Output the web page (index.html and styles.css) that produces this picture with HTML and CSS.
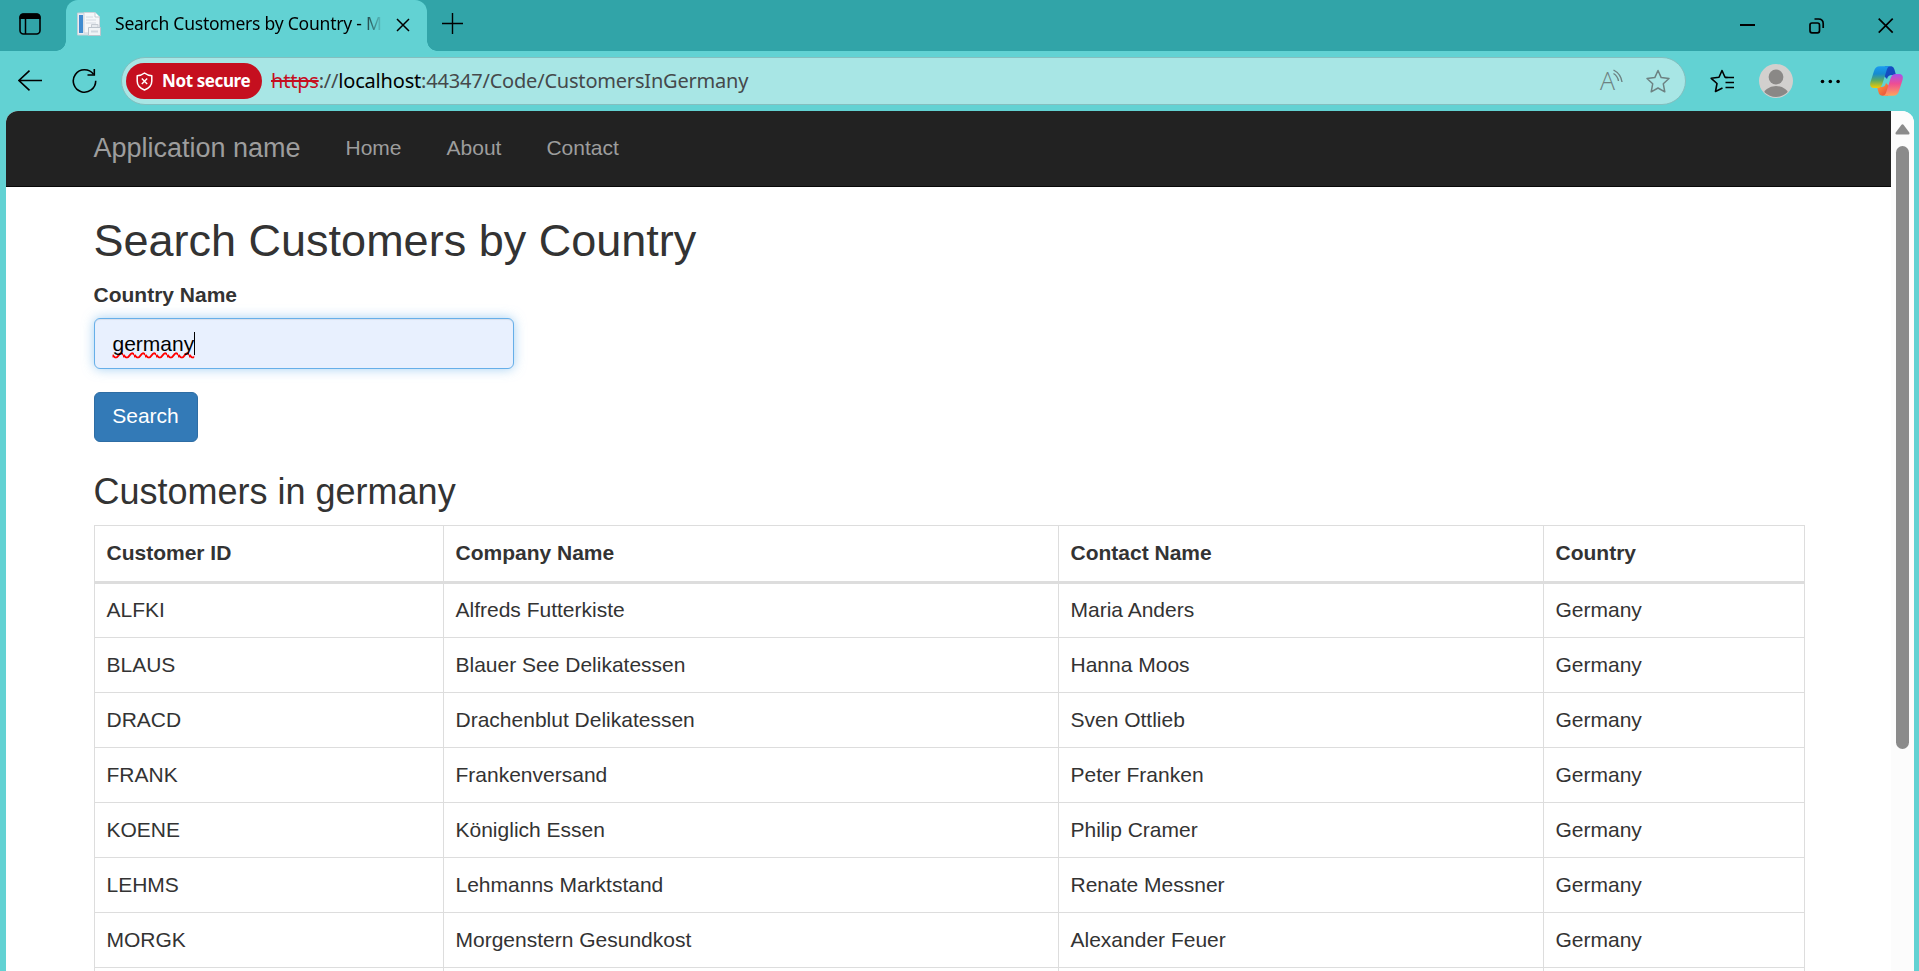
FILE: index.html
```html
<!DOCTYPE html>
<html lang="en">
<head>
<meta charset="utf-8">
<title>Search Customers by Country</title>
<link rel="stylesheet" href="styles.css">
</head>
<body>
<div class="browser">
  <header class="tabstrip">
    <svg class="tab-actions" width="22" height="22" viewBox="0 0 22 22"><rect x="1" y="1" width="20" height="20" rx="3.5" fill="none" stroke="#000" stroke-width="1.6"/><path d="M.5 6V4Q.5.5 4 .5H18Q21.500 .5 21.500 4V6Z"/><path d="M6.500 5V21" stroke="#000" stroke-width="1.500"/></svg>
    <div class="tab">
      <svg class="favicon" width="24" height="24" viewBox="0 0 24 24"><path d="M.5 1H16V23H.5Z" fill="#e9edf2" stroke="#c7d0d8"/><path d="M2 3H6V21H2Z" fill="#3f8bd0"/><path d="M7 .5H18L22.500 5V21H7Z" fill="#f5f7f9" stroke="#cdd3da"/><path d="M18 .5V5H22.500" fill="#fff" stroke="#c5cbd2"/><path d="M9 5H16M9 8H19M9 11H19" stroke="#d4dae2"/><path d="M14.500 12.500H21V21H14.500Z" fill="#e6eaee" stroke="#c5cbd2"/><path d="M11.500 15.500H23.500V23.500H11.500Z" fill="#f1f4f6" stroke="#bcc4cc"/><path d="M14 19.500H21" stroke="#d0d8e0" stroke-width="2"/></svg>
      <span class="tab-title">Search Customers by Country - M</span>
      <svg class="tab-close" width="14" height="14" viewBox="0 0 14 14"><path d="M1 1L13 13M13 1L1 13" stroke="#000" stroke-width="1.500"/></svg>
    </div>
    <svg class="new-tab" width="22" height="22" viewBox="0 0 22 22"><path d="M0 10.500H21M10.500 0V21" stroke="#000" stroke-width="1.400"/></svg>
    <div class="window-controls">
      <svg width="16" height="16" viewBox="0 0 16 16"><path d="M0 7H15" stroke="#000" stroke-width="2"/></svg>
      <svg width="16" height="16" viewBox="0 0 16 16"><rect x="1" y="5" width="9.500" height="9.800" rx="2" fill="none" stroke="#000" stroke-width="1.700"/><path d="M5.500 1H9.500Q14.200 1 14.200 5.700V10" fill="none" stroke="#000" stroke-width="1.700"/></svg>
      <svg width="16" height="16" viewBox="0 0 16 16"><path d="M.7.700L14.700 14.700M14.700 .7L.7 14.700" stroke="#000" stroke-width="1.700"/></svg>
    </div>
  </header>

  <div class="toolbar">
    <svg class="back" width="25" height="22" viewBox="0 0 25 22"><path d="M24 10.500H1M11.500 .7L1 10.500L11.500 20.300" fill="none" stroke="#000" stroke-width="1.600"/></svg>
    <svg class="reload" width="26" height="26" viewBox="0 0 26 26"><path d="M21.500 6.300A11.200 11.200 0 1 0 23.700 12.800" fill="none" stroke="#000" stroke-width="1.600"/><path d="M22.300 1V7H15.500" fill="none" stroke="#000" stroke-width="1.600"/></svg>
    <div class="address">
      <div class="warning">
        <svg width="17" height="19" viewBox="0 0 17 19"><path d="M8.500 1C6.300 2.800 4 3.600 1.200 3.800V9C1.200 13.500 4 16.300 8.500 18C13 16.300 15.800 13.500 15.800 9V3.800C13 3.600 10.700 2.800 8.500 1Z" fill="none" stroke="#fff" stroke-width="1.500" stroke-linejoin="round"/><path d="M5.800 6.600L11.200 12M11.200 6.600L5.800 12" stroke="#fff" stroke-width="1.400"/></svg>
        <span>Not secure</span>
      </div>
      <div class="url"><span class="scheme">https</span>://<span class="host">localhost</span>:44347/Code/CustomersInGermany</div>
      <svg class="read-aloud" width="24" height="24" viewBox="0 0 24 24"><text x="0" y="21" class="read-letter">A</text><path d="M13.500 1A16 16 0 0 1 22 13M13.500 4.500A11 11 0 0 1 18.500 12" fill="none" stroke="#6d8282" stroke-width="1.400"/></svg>
      <svg class="star" width="26" height="25" viewBox="0 0 26 25"><path d="M13 1.500L16.200 8.600L24 9.500L18.300 14.800L19.800 22.800L13 19L6.200 22.800L7.700 14.800L2 9.500L9.800 8.600Z" fill="none" stroke="#6d8282" stroke-width="1.500" stroke-linejoin="round"/></svg>
    </div>
    <svg class="favorites" width="25" height="25" viewBox="0 0 25 25"><path d="M17.500 8.500L15 8.300L12 1.500L9 8.300L1.200 9.300L7 14.500L5.500 22.500L12.500 19" fill="none" stroke="#000" stroke-width="1.600" stroke-linejoin="round"/><path d="M15 8.500H24M15.500 13.500H24M15.500 18.500H24" stroke="#000" stroke-width="1.500"/></svg>
    <svg class="avatar" width="34" height="34" viewBox="0 0 34 34"><defs><clipPath id="face"><circle cx="17" cy="17" r="16"/></clipPath></defs><circle cx="17" cy="17" r="17" fill="#d2d0ce"/><g clip-path="url(#face)" fill="#8a8886"><circle cx="17" cy="13" r="7.400"/><ellipse cx="17" cy="32" rx="13" ry="10"/></g></svg>
    <svg class="more" width="21" height="5" viewBox="0 0 21 5"><circle cx="2.500" cy="2.500" r="1.800"/><circle cx="10.300" cy="2.500" r="1.800"/><circle cx="18.100" cy="2.500" r="1.800"/></svg>
    <svg class="copilot" width="34" height="31" viewBox="0 0 34 31">
      <defs>
        <linearGradient id="cool" x1="0" y1="0" x2="0" y2="1"><stop offset="0" stop-color="#1a9bf0"/><stop offset=".35" stop-color="#168bd0"/><stop offset=".65" stop-color="#5aaa65"/><stop offset="1" stop-color="#f5cb00"/></linearGradient>
        <linearGradient id="warm" x1="0" y1="0" x2="0" y2="1"><stop offset="0" stop-color="#a553ec"/><stop offset=".45" stop-color="#ef4d93"/><stop offset="1" stop-color="#ffa35c"/></linearGradient>
        <linearGradient id="deep" x1="0" y1="0" x2="1" y2="1"><stop offset="0" stop-color="#1552c8"/><stop offset="1" stop-color="#1546b8"/></linearGradient>
        <linearGradient id="ember" x1="0" y1="0" x2="1" y2="1"><stop offset="0" stop-color="#ffa03c"/><stop offset="1" stop-color="#e9423c"/></linearGradient>
      </defs>
      <path d="M15 0.300H20.500C23.500 .3 24.200 2.500 25 5.500L26 9H22C19 9 18 10 17 13L13 9Z" fill="url(#deep)"/>
      <path d="M18 29.700H12.500C9.500 29.700 8.800 27.500 8 24.500L7 21H11C14 21 15 20 16 17L20 21Z" fill="url(#ember)"/>
      <path d="M10 .3H20.500C18 .3 17.300 2.200 16.400 5L12.500 17.500C11.500 20.800 10 22 7 22H4C.5 22-.5 19.500.5 16L4 5C5 2 6.500 .3 10 .3Z" fill="url(#cool)"/>
      <path d="M23 29.700H12.500C15 29.700 15.700 27.800 16.600 25L20.500 12.500C21.500 9.200 23 8 26 8H29C32.500 8 33.500 10.500 32.500 14L29 25C28 28 26.500 29.700 23 29.700Z" fill="url(#warm)"/>
    </svg>
  </div>

  <div class="viewport">
    <main class="page">
      <nav class="navbar">
        <a class="brand">Application name</a>
        <a class="nav-link">Home</a>
        <a class="nav-link">About</a>
        <a class="nav-link">Contact</a>
      </nav>
      <div class="container">
        <h2>Search Customers by Country</h2>
        <label class="label">Country Name</label>
        <div class="input"><span class="typed">germany</span><span class="caret"></span></div>
        <button class="button">Search</button>
        <h3>Customers in germany</h3>
        <table class="customers">
          <colgroup><col class="col-id"><col class="col-company"><col class="col-contact"><col class="col-country"></colgroup>
          <thead><tr><th>Customer ID</th><th>Company Name</th><th>Contact Name</th><th>Country</th></tr></thead>
          <tbody>
            <tr><td>ALFKI</td><td>Alfreds Futterkiste</td><td>Maria Anders</td><td>Germany</td></tr>
            <tr><td>BLAUS</td><td>Blauer See Delikatessen</td><td>Hanna Moos</td><td>Germany</td></tr>
            <tr><td>DRACD</td><td>Drachenblut Delikatessen</td><td>Sven Ottlieb</td><td>Germany</td></tr>
            <tr><td>FRANK</td><td>Frankenversand</td><td>Peter Franken</td><td>Germany</td></tr>
            <tr><td>KOENE</td><td>Königlich Essen</td><td>Philip Cramer</td><td>Germany</td></tr>
            <tr><td>LEHMS</td><td>Lehmanns Marktstand</td><td>Renate Messner</td><td>Germany</td></tr>
            <tr><td>MORGK</td><td>Morgenstern Gesundkost</td><td>Alexander Feuer</td><td>Germany</td></tr>
            <tr class="next"><td></td><td></td><td></td><td></td></tr>
          </tbody>
        </table>
      </div>
    </main>
    <aside class="scrollbar">
      <svg width="15" height="11" viewBox="0 0 15 11"><path d="M6.300 1Q7.500-.5 8.700 1L14.300 8.500Q15 10.500 13.500 10.500H1.500Q0 10.500 .7 8.500Z" fill="#8b8b8b"/></svg>
      <div class="thumb"></div>
    </aside>
  </div>
</div>
</body>
</html>
```
FILE: styles.css
```css
* { box-sizing: border-box; }
body { margin: 0; overflow: hidden; font-family: "Liberation Sans", Arial, sans-serif; }
svg { display: block; flex: none; }

.browser { display: flex; flex-direction: column; width: 1919px; height: 971px; background: #62d2d3; overflow: hidden; }

/* Tab strip */
.tabstrip { display: flex; flex: none; height: 51px; background: #31a4a8; font-family: "Noto Sans", sans-serif; }
.tab-actions { margin: 13px 0 0 19px; }
.tab { position: relative; display: flex; width: 361px; margin-left: 25px; padding-left: 11px; background: #62d2d3; border-radius: 12px 12px 0 0; }
.tab::before, .tab::after { content: ""; position: absolute; bottom: 0; width: 10px; height: 10px; }
.tab::before { left: -10px; background: radial-gradient(circle at 0 0, transparent 9.500px, #62d2d3 10px); }
.tab::after { right: -10px; background: radial-gradient(circle at 100% 0, transparent 9.500px, #62d2d3 10px); }
.favicon { margin-top: 12px; }
.tab-title { flex: none; width: 267px; margin-left: 14px; white-space: nowrap; font-size: 17.500px; line-height: 47px; letter-spacing: -0.230px; -webkit-mask-image: linear-gradient(90deg, #000 244px, transparent 268px); mask-image: linear-gradient(90deg, #000 244px, transparent 268px); }
.tab-close { margin: 18px 0 0 14px; }
.new-tab { margin: 13px 0 0 15px; }
.window-controls { display: flex; gap: 53px; margin: 18px 25px 0 auto; }

/* Toolbar */
.toolbar { display: flex; flex: none; align-items: center; height: 60px; font-family: "Noto Sans", sans-serif; }
.back { margin-left: 18px; }
.reload { margin-left: 29px; }
.address { display: flex; align-items: center; width: 1565px; height: 48px; margin-left: 23px; padding: 0 14px 0 4px; background: #a8e6e5; border: 1.500px solid #83bfbf; border-radius: 24px; }
.warning { display: flex; align-items: center; width: 136px; height: 36px; padding-left: 10px; background: #c50f1f; border-radius: 18px; color: #fff; font-size: 17px; font-weight: 700; white-space: nowrap; }
.warning span { margin-left: 9px; padding-bottom: 1px; letter-spacing: -0.400px; }
.url { margin-left: 9px; padding-bottom: 1px; color: #45494b; font-size: 20px; letter-spacing: -0.200px; white-space: nowrap; }
.scheme { color: #c50f1f; text-decoration: line-through; text-decoration-thickness: 2px; }
.host { color: #000; }
.read-aloud { margin-left: auto; overflow: visible; }
.read-letter { font: 400 25px "Open Sans", sans-serif; font-weight: 300; fill: #6d8282; }
.star { margin-left: 21px; }
.favorites { margin-left: 24px; }
.avatar { margin-left: 24px; }
.more { margin-left: 27px; }
.copilot { margin-left: 29px; }

/* Page area */
.viewport { display: flex; flex: none; width: 1908px; height: 860px; margin-left: 6px; background: #fff; border-radius: 12px 12px 0 0; overflow: hidden; }
.page { width: 1885px; color: #333; font-size: 21px; line-height: 30px; }
.navbar { display: flex; align-items: center; height: 76px; padding: 0 0 1px 87.500px; background: #222; border-bottom: 1px solid #080808; color: #9d9d9d; }
.brand { width: 229px; font-size: 27px; white-space: nowrap; }
.nav-link { padding: 0 22px 0 23px; }
.container { padding: 29px 87px 0 87.500px; }
h2, h3 { margin: 0; color: #333; font-weight: 500; white-space: nowrap; }
h2 { font-size: 45px; line-height: 50px; }
h3 { margin-top: 30px; font-size: 36px; line-height: 40px; }
.label { display: block; margin-top: 14px; font-weight: 700; }
.input { display: flex; align-items: center; width: 420px; height: 51px; margin-top: 8px; padding-left: 18px; background: #e8f0fe; border: 1px solid #66afe9; border-radius: 6px; box-shadow: inset 0 1px 1px rgba(0, 0, 0, .075), 0 0 12px rgba(102, 175, 233, .6); color: #000; }
.typed { text-decoration: underline wavy #f00; text-decoration-thickness: 1.500px; text-underline-offset: 1px; text-decoration-skip-ink: none; }
.caret { width: 1px; height: 23px; background: #000; }
.button { display: block; width: 104px; height: 50px; margin-top: 23px; padding: 0 0 2px; background: #337ab7; border: 1px solid #2e6da4; border-radius: 6px; color: #fff; font: 21px "Liberation Sans", Arial, sans-serif; }

.customers { width: 1710px; margin-top: 13px; table-layout: fixed; border-collapse: collapse; }
.col-id { width: 349px; }
.col-company { width: 615px; }
.col-contact { width: 485px; }
.col-country { width: 261px; }
.customers th, .customers td { height: 55px; padding: 0 12px 1px; border: 1px solid #ddd; text-align: left; }
.customers th { height: 57px; border-bottom-width: 3px; }

/* Scrollbar */
.scrollbar { display: flex; flex-direction: column; align-items: center; width: 23px; padding-top: 13px; background: #fcfcfc; }
.thumb { width: 13px; height: 603px; margin-top: 11px; background: #8b8b8b; border-radius: 7px; }
```
